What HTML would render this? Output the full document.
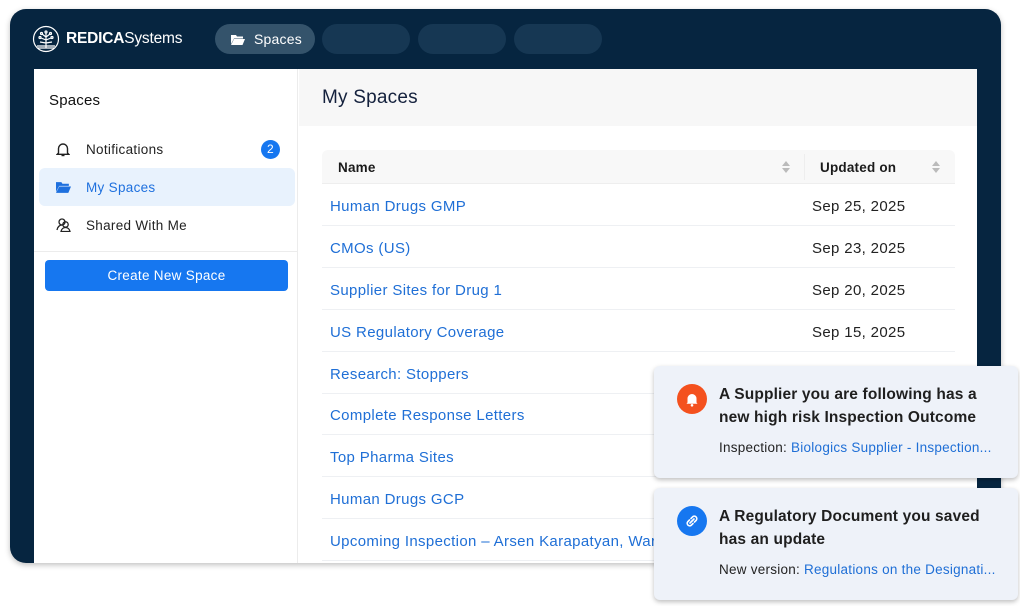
<!DOCTYPE html>
<html><head><meta charset="utf-8"><style>
*{box-sizing:border-box;margin:0;padding:0}
body{width:1020px;height:606px;background:#fff;font-family:"Liberation Sans",sans-serif;position:relative;overflow:hidden;color:#1b1b1b}
.frame{position:absolute;left:10px;top:9px;width:991px;height:554px;background:#062540;border-radius:16px;box-shadow:0 2px 6px rgba(0,0,0,.25);overflow:hidden}
.logo{position:absolute;left:22px;top:16px;display:flex;align-items:center;color:#fff}
.logo .t{font-size:15.5px;margin-left:6px;letter-spacing:-.2px}
.pill{position:absolute;top:15px;height:30px;border-radius:15px;background:#163753}
.pill.a{background:#34536b;color:#fff;font-size:14px;display:flex;align-items:center;padding-left:16px;letter-spacing:.2px}
.panel{position:absolute;left:24px;top:60px;width:943px;height:500px;background:#fff}
.side{position:absolute;left:0;top:0;width:264px;height:100%;border-right:1px solid #ececec}
.side h3{position:absolute;left:15px;top:23px;font-size:15px;font-weight:normal;color:#111;letter-spacing:.2px}
.item{position:absolute;left:5px;width:256px;height:38px;border-radius:6px;display:flex;align-items:center;padding-left:47px;font-size:13.5px;color:#222;letter-spacing:.3px}
.item svg{position:absolute;left:17px}
.item.sel{background:#e8f2fd;color:#1e70de}
.badge{position:absolute;right:15px;top:10px;width:19px;height:19px;border-radius:50%;background:#1677f0;color:#fff;font-size:12px;text-align:center;line-height:19px}
.btn{position:absolute;left:11px;top:191px;width:243px;height:31px;background:#1677f0;border-radius:4px;color:#fff;font-size:13.5px;text-align:center;line-height:31px;letter-spacing:.3px}
.hdr{position:absolute;left:265px;top:0;right:0;height:57px;background:#f7f7f7}
.hdr h2{position:absolute;left:23px;top:18px;font-size:19px;font-weight:normal;color:#14213d;letter-spacing:.2px}
.th{position:absolute;top:81px;left:288px;width:633px;height:34px;background:#f8f8f8;border-radius:6px 6px 0 0;border-bottom:1px solid #eee;font-size:13.5px;font-weight:bold}
.th span{position:absolute;top:10px;letter-spacing:.2px}
.sort{position:absolute;top:11px;width:8px;height:12px}
.row{position:absolute;left:288px;width:633px;height:42px;border-bottom:1px solid #eef0f3;font-size:15px;letter-spacing:.35px}
.row a{position:absolute;left:8px;top:14px;color:#1f6fd6;text-decoration:none;white-space:nowrap}
.row b{position:absolute;left:490px;top:14px;font-weight:normal;color:#222}
.toast{position:absolute;left:654px;width:364px;height:112px;background:#eef2f9;border-radius:6px;box-shadow:0 2px 5px rgba(0,0,0,.25)}
.toast .ic{position:absolute;left:23px;top:18px;width:30px;height:30px;border-radius:50%}
.toast .h{position:absolute;left:65px;top:18px;font-size:15.5px;font-weight:bold;line-height:22.5px;color:#1f1f1f;letter-spacing:.15px}
.toast .s{position:absolute;left:65px;top:74px;font-size:13.5px;color:#222;white-space:nowrap;letter-spacing:.25px}
.toast .s span{color:#1f6fd6}
</style></head><body>
<div class="frame">
 <div class="logo">
  <svg width="28" height="28" viewBox="0 0 28 28" fill="none" stroke="#fff" stroke-width="1.2"><circle cx="14" cy="14" r="12.5"/><path d="M14 23V8M14 12l-4-3M14 12l4-3M14 15l-5-2M14 15l5-2M14 18l-6-1M14 18l6-1M5 21h18M6 23h16"/><circle cx="14" cy="7" r="1"/><circle cx="9.5" cy="8.5" r="1"/><circle cx="18.5" cy="8.5" r="1"/><circle cx="8" cy="12.5" r="1"/><circle cx="20" cy="12.5" r="1"/></svg>
  <span class="t"><b>REDICA</b>Systems</span>
 </div>
 <div class="pill a" style="left:205px;width:100px"><svg width="14" height="11" viewBox="0 0 14 11" style="margin-right:9px"><path d="M0 1h5l1 1.5h6v2H3L0 10z" fill="#fff"/><path d="M3 5h11l-2.5 6H0z" fill="#fff"/></svg>Spaces</div>
 <div class="pill" style="left:312px;width:88px"></div>
 <div class="pill" style="left:408px;width:88px"></div>
 <div class="pill" style="left:504px;width:88px"></div>
 <div class="panel">
  <div class="side">
   <h3>Spaces</h3>
   <div class="item" style="top:61px"><svg width="14" height="15" viewBox="0 0 14 15" fill="none" stroke="#222" stroke-width="1.4"><path d="M2.5 11V6.5a4.5 4.5 0 019 0V11l1.2 1.3H1.3z"/><path d="M5.5 13.5h3"/></svg>Notifications<span class="badge">2</span></div>
   <div class="item sel" style="top:99px"><svg width="15" height="12" viewBox="0 0 14 11"><path d="M0 1h5l1 1.5h6v2H3L0 10z" fill="#1e70de"/><path d="M3 5h11l-2.5 6H0z" fill="#1e70de"/></svg>My Spaces</div>
   <div class="item" style="top:137px"><svg width="15" height="14" viewBox="0 0 15 14" fill="none" stroke="#222" stroke-width="1.3"><circle cx="6" cy="4" r="3"/><circle cx="9.5" cy="6.5" r="2.7"/><path d="M1 12c.5-3 2.5-5 5-5M5 13.5c.5-2.5 2.3-4 4.5-4s4 1.5 4.5 4z"/></svg>Shared With Me</div>
   <div style="position:absolute;left:0;top:182px;width:264px;border-top:1px solid #ececec"></div>
   <div class="btn">Create New Space</div>
  </div>
  <div class="hdr"><h2>My Spaces</h2></div>
  <div class="th"><span style="left:16px">Name</span>
   <svg class="sort" style="left:460px" viewBox="0 0 8 12"><path d="M4 0l4 5H0zM4 12l4-5H0z" fill="#bbb"/></svg>
   <div style="position:absolute;left:482px;top:4px;height:26px;border-left:1px solid #eee"></div>
   <span style="left:498px">Updated on</span>
   <svg class="sort" style="left:610px" viewBox="0 0 8 12"><path d="M4 0l4 5H0zM4 12l4-5H0z" fill="#bbb"/></svg>
  </div>
  <div class="row" style="top:115px"><a>Human Drugs GMP</a><b>Sep 25, 2025</b></div>
  <div class="row" style="top:157px"><a>CMOs (US)</a><b>Sep 23, 2025</b></div>
  <div class="row" style="top:199px"><a>Supplier Sites for Drug 1</a><b>Sep 20, 2025</b></div>
  <div class="row" style="top:241px"><a>US Regulatory Coverage</a><b>Sep 15, 2025</b></div>
  <div class="row" style="top:283px"><a>Research: Stoppers</a></div>
  <div class="row" style="top:324px"><a>Complete Response Letters</a></div>
  <div class="row" style="top:366px"><a>Top Pharma Sites</a></div>
  <div class="row" style="top:408px"><a>Human Drugs GCP</a><b>Apr 19, 2025</b></div>
  <div class="row" style="top:450px"><a>Upcoming Inspection – Arsen Karapatyan, Warsaw</a></div>
 </div>
</div>
<div class="toast" style="top:366px">
 <div class="ic" style="background:#f4511e"><svg width="30" height="30" viewBox="0 0 30 30"><path d="M10.5 18.5v-4a4.5 4.5 0 019 0v4l1 1.2h-11z" fill="#fff"/><circle cx="15" cy="21.3" r="1.3" fill="#fff"/></svg></div>
 <div class="h">A Supplier you are following has a<br>new high risk Inspection Outcome</div>
 <div class="s">Inspection: <span>Biologics Supplier - Inspection...</span></div>
</div>
<div class="toast" style="top:488px">
 <div class="ic" style="background:#1677f0"><svg width="30" height="30" viewBox="0 0 30 30" fill="none" stroke="#fff" stroke-width="1.6" stroke-linecap="round"><path d="M14 12.5l1.8-1.8a2.5 2.5 0 013.5 3.5l-1.8 1.8M16 17.5l-1.8 1.8a2.5 2.5 0 01-3.5-3.5l1.8-1.8M13 17l4-4"/></svg></div>
 <div class="h">A Regulatory Document you saved<br>has an update</div>
 <div class="s">New version: <span>Regulations on the Designati...</span></div>
</div>
</body></html>
